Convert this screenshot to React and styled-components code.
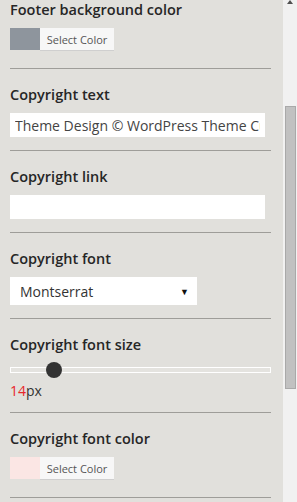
import React from "react";
import styled, { createGlobalStyle } from "styled-components";

const GlobalStyle = createGlobalStyle`
  html, body {
    margin: 0;
    padding: 0;
    background: #e1e0dc;
    font-family: "Open Sans", "Liberation Sans", sans-serif;
  }
`;

const Frame = styled.div`
  display: flex;
  width: 297px;
  height: 502px;
  overflow: hidden;
`;

const Panel = styled.div`
  flex: 1;
  padding: 0 12px 0 10px;
  margin-top: -16px;
`;

const Section = styled.div`
  padding: 16px 0 13px;
  border-bottom: 1px solid #9e9d99;
`;

const Heading = styled.h3`
  margin: 0 0 8px;
  font-size: 14.5px;
  line-height: 20px;
  font-weight: 600;
  color: #262626;
`;

const TextInput = styled.input`
  box-sizing: border-box;
  display: block;
  width: 255px;
  height: 24px;
  margin: 0;
  padding: 0 5px;
  border: none;
  outline: none;
  background: #fff;
  font-family: "Open Sans", "Liberation Sans", sans-serif;
  font-size: 14px;
  color: #444;
`;

const SelectBox = styled.div`
  box-sizing: border-box;
  display: flex;
  align-items: center;
  justify-content: space-between;
  width: 187px;
  height: 28px;
  padding: 0 8px 0 10px;
  background: #fff;
  font-size: 14px;
  color: #333;
`;

const Caret = styled.span`
  font-size: 9px;
  color: #111;
`;

const ColorPicker = styled.div`
  display: flex;
  height: 22px;
  margin-bottom: 5px;
`;

const Swatch = styled.span`
  width: 30px;
  height: 22px;
  background: ${(p) => p.color};
`;

const ColorButton = styled.button`
  box-sizing: border-box;
  width: 74px;
  height: 22px;
  margin: 0;
  padding: 0;
  border: none;
  background: #f7f7f7;
  box-shadow: 0 1px 0 #cfcfcf;
  font-family: "Open Sans", "Liberation Sans", sans-serif;
  font-size: 11px;
  color: #555;
`;

const Range = styled.input`
  -webkit-appearance: none;
  appearance: none;
  box-sizing: border-box;
  display: block;
  width: 261px;
  height: 6px;
  margin: 12px 0 0;
  border: 1px solid #fff;
  background: #e4e3df;
  outline: none;

  &::-webkit-slider-thumb {
    -webkit-appearance: none;
    width: 16px;
    height: 16px;
    border-radius: 50%;
    background: #333;
  }
`;

const RangeValue = styled.div`
  margin-top: 10px;
  font-size: 14px;
  line-height: 16px;
  color: #333;

  & b {
    font-weight: 400;
    color: #e8262a;
  }
`;

const ScrollTrack = styled.div`
  display: flex;
  flex-direction: column;
  align-items: center;
  width: 15px;
  background: #f1f1f1;
`;

const ArrowUp = styled.span`
  width: 0;
  height: 0;
  border-left: 3px solid transparent;
  border-right: 3px solid transparent;
  border-bottom: 4px solid #505050;
`;

const Thumb = styled.div`
  box-sizing: border-box;
  width: 11px;
  height: 283px;
  margin-top: 102px;
  background: #c1c1c1;
  border: 1px solid #a9a9a9;
`;

function ColorField({ label, color }) {
  return (
    <Section>
      <Heading>{label}</Heading>
      <ColorPicker>
        <Swatch color={color} />
        <ColorButton>Select Color</ColorButton>
      </ColorPicker>
    </Section>
  );
}

export default function App() {
  return (
    <>
      <GlobalStyle />
      <Frame>
        <Panel>
          <ColorField label="Footer background color" color="#8e959d" />
          <Section>
            <Heading>Copyright text</Heading>
            <TextInput defaultValue="Theme Design © WordPress Theme Customizer" />
          </Section>
          <Section>
            <Heading>Copyright link</Heading>
            <TextInput defaultValue="" />
          </Section>
          <Section>
            <Heading>Copyright font</Heading>
            <SelectBox>
              Montserrat
              <Caret>▼</Caret>
            </SelectBox>
          </Section>
          <Section>
            <Heading>Copyright font size</Heading>
            <Range type="range" min="10" max="38" defaultValue="14" />
            <RangeValue>
              <b>14</b>px
            </RangeValue>
          </Section>
          <ColorField label="Copyright font color" color="#fbe6e4" />
        </Panel>
        <ScrollTrack>
          <ArrowUp />
          <Thumb />
        </ScrollTrack>
      </Frame>
    </>
  );
}
